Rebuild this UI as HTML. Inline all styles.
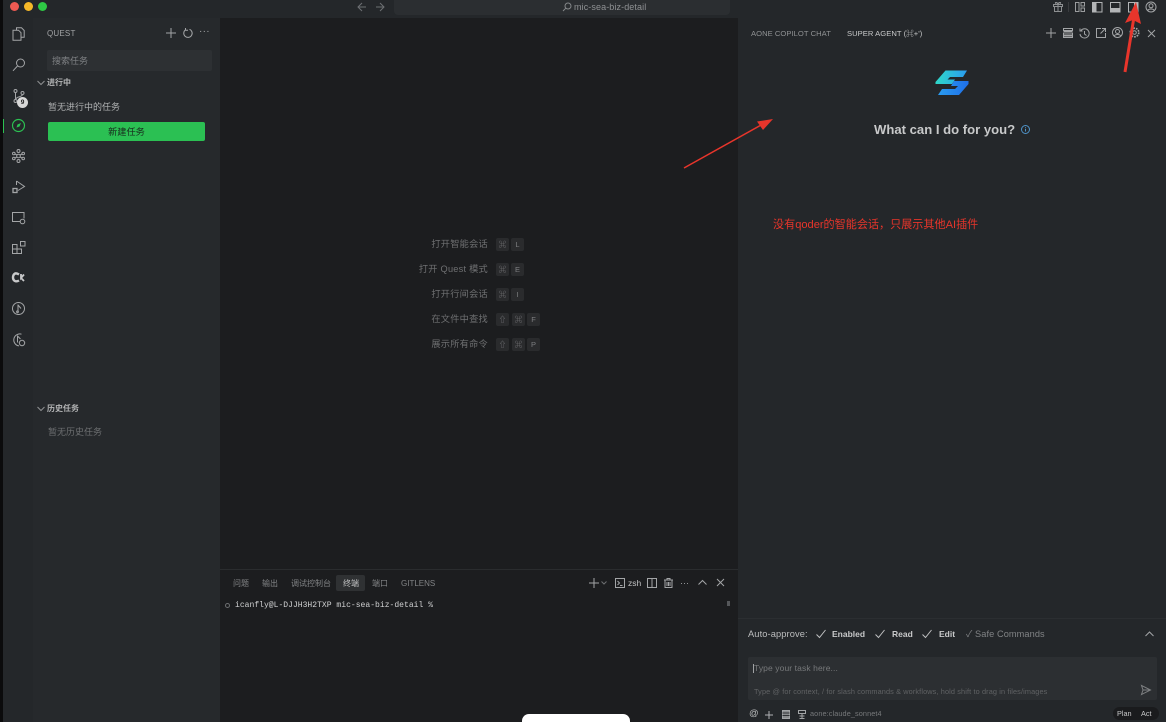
<!DOCTYPE html>
<html lang="zh">
<head>
<meta charset="utf-8">
<style>
html,body{margin:0;padding:0;background:#1c1d1f;width:1166px;height:722px;overflow:hidden;}
body{position:relative;font-family:"Liberation Sans","Noto Sans CJK SC",sans-serif;color:#aaa;}
#w{position:absolute;left:0;top:0;width:1166px;height:722px;overflow:hidden;filter:blur(.35px);}
.a{position:absolute;white-space:nowrap;}
.r{position:absolute;}
svg.i{position:absolute;fill:none;stroke:#a3a5a7;stroke-width:1;overflow:visible;}
.k{position:absolute;height:13px;width:13px;background:#2a2b2d;border-radius:2px;color:#7d7e80;font-size:7.5px;line-height:13px;text-align:center;}
.sl{position:absolute;right:678px;font-size:9.2px;color:#6f7072;letter-spacing:.25px;white-space:nowrap;line-height:12px;}
</style>
</head>
<body>
<div id="w">
<!-- regions -->
<div class="r" style="left:0;top:0;width:1166px;height:18px;background:#24272a;"></div>
<div class="r" style="left:0;top:0;width:3px;height:722px;background:#0b0b0c;"></div>
<div class="r" style="left:3px;top:18px;width:30px;height:704px;background:#24272a;"></div>
<div class="r" style="left:33px;top:18px;width:187px;height:704px;background:#26292c;"></div>
<div class="r" style="left:220px;top:18px;width:518px;height:704px;background:#1c1d1f;"></div>
<div class="r" style="left:738px;top:18px;width:428px;height:704px;background:#24272a;"></div>
<div class="r" style="left:220px;top:569px;width:518px;height:1px;background:#2a2c2e;"></div>
<div class="r" style="left:738px;top:618px;width:428px;height:1px;background:#2b2e31;"></div>
<div class="r" style="left:394px;top:0;width:336px;height:15px;background:#2b2e31;border-radius:0 0 4px 4px;"></div>

<!-- traffic lights -->
<div class="r" style="left:10px;top:2px;width:9px;height:9px;border-radius:50%;background:#ee5a52;"></div>
<div class="r" style="left:24px;top:2px;width:9px;height:9px;border-radius:50%;background:#f6b828;"></div>
<div class="r" style="left:38px;top:2px;width:9px;height:9px;border-radius:50%;background:#2ec845;"></div>

<!-- title nav -->
<svg class="i" style="left:357px;top:2px;stroke:#6d7073" width="10" height="10"><path d="M9 5H1M5 1 1 5l4 4"/></svg>
<svg class="i" style="left:375px;top:2px;stroke:#6d7073" width="10" height="10"><path d="M1 5h8M5 1l4 4-4 4"/></svg>
<svg class="i" style="left:562px;top:2px;stroke:#85888a" width="10" height="10"><circle cx="6" cy="4" r="3"/><path d="M3.8 6.2 1 9"/></svg>
<div class="a" style="left:574px;top:1px;font-size:9px;line-height:12px;color:#8f9193;letter-spacing:.1px;">mic-sea-biz-detail</div>

<!-- title right icons -->
<svg class="i" style="left:1052px;top:1px;stroke:#8d8f91" width="12" height="12"><path d="M1.5 3.5h9v2h-9zM2.5 5.500v5h7v-5M6 3.500v7M4 3.500 3.500 1.500h1.500l1 2 1-2h1.500L8 3.500"/></svg>
<div class="r" style="left:1068px;top:2px;width:1px;height:10px;background:#3a3c3f;"></div>
<svg class="i" style="left:1075px;top:2px;stroke:#9a9c9e" width="10" height="11"><rect x=".5" y=".5" width="3.500" height="9"/><rect x="6" y=".5" width="3.500" height="3.500"/><rect x="6" y="6" width="3.500" height="3.500"/></svg>
<svg class="i" style="left:1092px;top:2px;stroke:#b3b5b7" width="11" height="11"><rect x=".5" y=".5" width="9.500" height="9.500"/><rect x="1" y="1" width="3.500" height="8.500" fill="#b3b5b7" stroke="none"/></svg>
<svg class="i" style="left:1110px;top:2px;stroke:#b3b5b7" width="11" height="11"><rect x=".5" y=".5" width="9.500" height="9.500"/><rect x="1" y="6" width="8.500" height="3.500" fill="#b3b5b7" stroke="none"/></svg>
<svg class="i" style="left:1128px;top:2px;stroke:#b3b5b7" width="11" height="11"><rect x=".5" y=".5" width="9.500" height="9.500"/><rect x="6" y="1" width="3.500" height="8.500" fill="#b3b5b7" stroke="none"/></svg>
<svg class="i" style="left:1145px;top:1px;stroke:#a3a5a7" width="12" height="12"><circle cx="6" cy="6" r="5"/><circle cx="6" cy="4.800" r="2"/><path d="M2.800 9.500c.8-2 5.600-2 6.400 0"/></svg>

<!-- activity bar -->
<svg class="i" style="left:12px;top:27px" width="13" height="14"><path d="M4.500 3V.8h5l2.700 2.700v6.700H9.500M1 3.200h5.500l2.500 2.500v7.500H1z"/></svg>
<svg class="i" style="left:12px;top:58px" width="14" height="14"><circle cx="8.500" cy="5" r="4"/><path d="M5.500 8 1 12.800"/></svg>
<svg class="i" style="left:13px;top:89px" width="12" height="14"><circle cx="2.500" cy="2" r="1.500"/><circle cx="2.500" cy="12" r="1.500"/><circle cx="9.500" cy="4" r="1.500"/><path d="M2.500 3.500v7M9.500 5.500C9.500 8 3 7.500 2.500 10.500"/></svg>
<div class="r" style="left:17px;top:97px;width:11px;height:11px;border-radius:50%;background:#d8d8d8;color:#222;font-size:6.500px;font-weight:bold;line-height:11px;text-align:center;">9</div>
<div class="r" style="left:3px;top:119px;width:1px;height:14px;background:#2cc152;"></div>
<svg class="i" style="left:12px;top:119px;stroke:#2cc152;stroke-width:1.200" width="14" height="14"><circle cx="6.500" cy="6.500" r="6"/><path d="M4.500 8.500 5.500 5.500 9 4 7.500 7.500z" fill="#2cc152" stroke="none"/></svg>
<svg class="i" style="left:12px;top:149px" width="13" height="14"><circle cx="6.500" cy="2" r="1.500"/><circle cx="6.500" cy="7" r="1.800"/><circle cx="6.500" cy="12" r="1.500"/><circle cx="1.800" cy="4.500" r="1.300"/><circle cx="11.200" cy="4.500" r="1.300"/><circle cx="1.800" cy="9.500" r="1.300"/><circle cx="11.200" cy="9.500" r="1.300"/><path d="M3 5l2 1M10 5 8 6M3 9l2-1M10 9 8 8"/></svg>
<svg class="i" style="left:12px;top:180px" width="13" height="14"><path d="M4.500 1 12.500 6.500 6 10.500"/><path d="M4.500 1v4"/><rect x="1" y="8.500" width="4" height="4" stroke-width="1.300"/></svg>
<svg class="i" style="left:12px;top:212px" width="14" height="13"><path d="M8 9.500H.5V.5h11.500v6"/><circle cx="10.500" cy="9.500" r="2.300"/></svg>
<svg class="i" style="left:12px;top:241px" width="14" height="14"><rect x=".5" y="3.500" width="4.500" height="4.500"/><rect x=".5" y="8" width="4.500" height="4.500"/><rect x="5" y="8" width="4.500" height="4.500"/><path d="M5 8h4.500V4.500" stroke="none"/><rect x="8.500" y=".5" width="4.500" height="4.500"/></svg>
<svg class="i" style="left:12px;top:272px;stroke:#c8c9ca;stroke-width:2.400" width="13" height="12"><path d="M7 2.500C3-.2 1 2.500 1 5.500s2.500 5 6 3"/><path d="M9 2v4l3-3.500M9 6l3 3" stroke-width="1.800"/></svg>
<svg class="i" style="left:12px;top:302px" width="13" height="13"><circle cx="6.500" cy="6.500" r="6"/><path d="M6 2.500v7.500M6 3l3 3.500"/><circle cx="5.500" cy="9.800" r=".9"/></svg>
<svg class="i" style="left:12px;top:333px" width="14" height="14"><path d="M9.500 1.200A6 6 0 1 0 7 12.900"/><path d="M5.500 2.500v7M5.500 3l3 3"/><circle cx="10" cy="10" r="2.700"/></svg>

<!-- sidebar -->
<div class="a" style="left:47px;top:28px;font-size:8px;line-height:12px;color:#a0a2a4;letter-spacing:.2px;">QUEST</div>
<svg class="i" style="left:166px;top:28px" width="10" height="10"><path d="M5 0v10M0 5h10"/></svg>
<svg class="i" style="left:183px;top:28px" width="10" height="10"><path d="M6.500 1.300A4.200 4.200 0 1 1 2.500 1.800M2.500 0v2.300H5"/></svg>
<div class="a" style="left:199px;top:26px;font-size:10px;line-height:12px;color:#a3a5a7;letter-spacing:.3px;">···</div>
<div class="r" style="left:47px;top:50px;width:165px;height:21px;background:#2d3033;border-radius:2px;"></div>
<div class="a" style="left:52px;top:55px;font-size:9px;line-height:12px;color:#7f8184;">搜索任务</div>
<svg class="i" style="left:37px;top:80px;stroke:#8f9193" width="8" height="6"><path d="M.5 1 4 4.500 7.500 1"/></svg>
<div class="a" style="left:47px;top:77px;font-size:8px;line-height:12px;color:#b6b7b8;font-weight:bold;">进行中</div>
<div class="a" style="left:48px;top:100.500px;font-size:9px;line-height:13px;color:#b1b3b4;">暂无进行中的任务</div>
<div class="r" style="left:48px;top:122px;width:157px;height:19px;background:#2bc053;border-radius:2px;"></div>
<div class="a" style="left:48px;width:157px;text-align:center;top:125.500px;font-size:9.200px;line-height:13px;color:#182a1d;">新建任务</div>
<svg class="i" style="left:37px;top:406px;stroke:#8f9193" width="8" height="6"><path d="M.5 1 4 4.500 7.500 1"/></svg>
<div class="a" style="left:47px;top:403px;font-size:8px;line-height:12px;color:#b6b7b8;font-weight:bold;">历史任务</div>
<div class="a" style="left:48px;top:426px;font-size:9px;line-height:13px;color:#6e7072;">暂无历史任务</div>

<!-- editor hints -->
<div class="sl" style="top:238px;">打开智能会话</div>
<div class="k" style="left:496px;top:238px;">⌘</div><div class="k" style="left:511px;top:238px;">L</div>
<div class="sl" style="top:263px;">打开 Quest 模式</div>
<div class="k" style="left:496px;top:263px;">⌘</div><div class="k" style="left:511px;top:263px;">E</div>
<div class="sl" style="top:288px;">打开行间会话</div>
<div class="k" style="left:496px;top:288px;">⌘</div><div class="k" style="left:511px;top:288px;">I</div>
<div class="sl" style="top:313px;">在文件中查找</div>
<div class="k" style="left:496px;top:313px;">⇧</div><div class="k" style="left:512px;top:313px;">⌘</div><div class="k" style="left:527px;top:313px;">F</div>
<div class="sl" style="top:338px;">展示所有命令</div>
<div class="k" style="left:496px;top:338px;">⇧</div><div class="k" style="left:512px;top:338px;">⌘</div><div class="k" style="left:527px;top:338px;">P</div>

<!-- terminal -->
<div class="a" style="left:233px;top:578px;font-size:8px;line-height:12px;color:#828486;">问题</div>
<div class="a" style="left:262px;top:578px;font-size:8px;line-height:12px;color:#828486;">输出</div>
<div class="a" style="left:291px;top:578px;font-size:8px;line-height:12px;color:#828486;">调试控制台</div>
<div class="r" style="left:336px;top:575px;width:29px;height:16px;background:#2f3133;border-radius:2px;"></div>
<div class="a" style="left:343px;top:578px;font-size:8px;line-height:12px;color:#c4c5c6;">终端</div>
<div class="a" style="left:372px;top:578px;font-size:8px;line-height:12px;color:#828486;">端口</div>
<div class="a" style="left:401px;top:578px;font-size:8px;line-height:12px;color:#828486;">GITLENS</div>
<svg class="i" style="left:589px;top:578px" width="10" height="10"><path d="M5 0v10M0 5h10"/></svg>
<svg class="i" style="left:601px;top:581px;stroke:#6d6f71" width="6" height="4"><path d="M.5.500 3 3 5.500.5"/></svg>
<svg class="i" style="left:615px;top:578px" width="10" height="10"><rect x=".5" y=".5" width="9" height="9"/><path d="M2.500 3 4.500 5 2.500 7M5 7.500h2.500"/></svg>
<div class="a" style="left:628px;top:577px;font-size:8.500px;line-height:12px;color:#c0c1c2;">zsh</div>
<svg class="i" style="left:647px;top:578px" width="10" height="10"><rect x=".5" y=".5" width="9" height="9"/><path d="M5 .5v9"/></svg>
<svg class="i" style="left:664px;top:578px" width="9" height="10"><path d="M0 2h9M3 2V.5h3V2M1 2v7.500h7V2M3 4v4M4.500 4v4M6 4v4"/></svg>
<div class="a" style="left:680px;top:577px;font-size:9px;line-height:12px;color:#a3a5a7;">···</div>
<svg class="i" style="left:698px;top:579px" width="9" height="7"><path d="M.5 5.500 4.500 1.500 8.500 5.500"/></svg>
<svg class="i" style="left:717px;top:579px" width="7" height="7"><path d="M0 0l7 7M7 0 0 7"/></svg>
<div class="r" style="left:225px;top:603px;width:3px;height:3px;border:1px solid #6d6f71;border-radius:50%;"></div>
<div class="a" style="left:235px;top:600px;font-family:'Liberation Mono',monospace;font-size:8.050px;line-height:12px;color:#d0d1d2;">icanfly@L-DJJH3H2TXP mic-sea-biz-detail %</div>
<div class="r" style="left:727px;top:601px;width:3px;height:5px;background:#55575a;"></div>

<!-- white shape -->
<div class="r" style="left:522px;top:714px;width:108px;height:8px;background:#fff;border-radius:7px 7px 0 0;"></div>

<!-- right panel header -->
<div class="a" style="left:751px;top:28px;font-size:7.600px;line-height:12px;color:#8f9193;letter-spacing:.05px;">AONE COPILOT CHAT</div>
<div class="a" style="left:847px;top:28px;font-size:7.600px;line-height:12px;color:#c8c9ca;letter-spacing:.05px;">SUPER AGENT (⌘+')</div>
<svg class="i" style="left:1046px;top:28px" width="10" height="10"><path d="M5 0v10M0 5h10"/></svg>
<svg class="i" style="left:1063px;top:28px" width="10" height="10"><path d="M.5.500h9v2h-9zM.5 3.500h9M.5 5h9v2h-9zM.5 8h9v1.500h-9z"/></svg>
<svg class="i" style="left:1079px;top:28px" width="11" height="11"><path d="M2 2.500A4.600 4.600 0 1 1 1 6M1 .5v2.500h2.500M5.500 3v3l2 1.500"/></svg>
<svg class="i" style="left:1096px;top:28px" width="10" height="10"><path d="M5 .5H.5v9h9V5M6 .5h3.500V4M9.500.5 4.500 5.500"/></svg>
<svg class="i" style="left:1112px;top:27px" width="11" height="11"><circle cx="5.500" cy="5.500" r="5"/><circle cx="5.500" cy="4.500" r="2"/><path d="M2.300 9c.8-2 5.600-2 6.400 0"/></svg>
<svg class="i" style="left:1129px;top:27px" width="11" height="11"><circle cx="5.500" cy="5.500" r="1.800"/><circle cx="5.500" cy="5.500" r="4.300" stroke-width="1.600" stroke-dasharray="1.700 1"/></svg>
<svg class="i" style="left:1148px;top:30px" width="7" height="7"><path d="M0 0l7 7M7 0 0 7"/></svg>

<!-- logo -->
<svg class="r" style="left:935px;top:70px" width="34" height="26" viewBox="0 0 34 26">
<defs><linearGradient id="g1" x1="0" y1="0" x2="1" y2="0"><stop offset="0" stop-color="#2fd8c8"/><stop offset="1" stop-color="#2a9cf0"/></linearGradient><linearGradient id="g2" x1="0" y1="0" x2="1" y2="0"><stop offset="0" stop-color="#2a9cf0"/><stop offset="1" stop-color="#1f6fe8"/></linearGradient></defs>
<path d="M10.500 .5H32L28 7H15L12.500 9.500H20L17 14H.5V12Z" fill="url(#g1)"/>
<path d="M19 11H33.500V14L24 25H3L7 19H20L23 16H16Z" fill="url(#g2)"/>
</svg>
<div class="a" style="left:874px;top:122px;font-size:13.100px;line-height:16px;color:#c8c9ca;font-weight:bold;">What can I do for you?</div>
<svg class="i" style="left:1021px;top:125px;stroke:#4f93c8" width="9" height="9"><circle cx="4.500" cy="4.500" r="4"/><path d="M4.500 4v2.500M4.500 2.300v1"/></svg>

<!-- annotation text -->
<div class="a" style="left:773px;top:218px;font-size:11.100px;line-height:14px;color:#e8352b;">没有qoder的智能会话，只展示其他AI插件</div>

<!-- auto approve -->
<div class="a" style="left:748px;top:628px;font-size:9.300px;line-height:12px;color:#bcbdbe;letter-spacing:.1px;">Auto-approve:</div>
<svg class="i" style="left:816px;top:629px;stroke:#c0c1c2" width="10" height="10"><path d="M.5 5.500 3.500 8.500 9.500 1"/></svg>
<div class="a" style="left:832px;top:628px;font-size:8.500px;line-height:12px;color:#c8c9ca;font-weight:bold;">Enabled</div>
<svg class="i" style="left:875px;top:629px;stroke:#c0c1c2" width="10" height="10"><path d="M.5 5.500 3.500 8.500 9.500 1"/></svg>
<div class="a" style="left:892px;top:628px;font-size:8.500px;line-height:12px;color:#c8c9ca;font-weight:bold;">Read</div>
<svg class="i" style="left:922px;top:629px;stroke:#c0c1c2" width="10" height="10"><path d="M.5 5.500 3.500 8.500 9.500 1"/></svg>
<div class="a" style="left:939px;top:628px;font-size:8.500px;line-height:12px;color:#c8c9ca;font-weight:bold;">Edit</div>
<div class="a" style="left:966px;top:628px;font-size:9.200px;line-height:12px;color:#818385;letter-spacing:.1px;">✓ Safe Commands</div>
<svg class="i" style="left:1145px;top:631px" width="9" height="6"><path d="M.5 5 4.500 1 8.500 5"/></svg>

<!-- input -->
<div class="r" style="left:748px;top:657px;width:409px;height:43px;background:#2c2f32;border-radius:2px;"></div>
<div class="r" style="left:753px;top:664px;width:1px;height:9px;background:#a0a2a4;"></div>
<div class="a" style="left:754px;top:662px;font-size:8.500px;line-height:12px;color:#77797b;letter-spacing:.1px;">Type your task here...</div>
<div class="a" style="left:754px;top:686px;font-size:7.300px;line-height:12px;color:#606264;letter-spacing:.13px;">Type @ for context, / for slash commands &amp; workflows, hold shift to drag in files/images</div>
<svg class="i" style="left:1141px;top:685px;stroke:#7d7f81" width="10" height="10"><path d="M.5.500 9.500 5 .5 9.500 2 5zM2 5h7.500"/></svg>

<!-- bottom bar -->
<div class="a" style="left:749px;top:708px;font-size:9.500px;line-height:12px;color:#bcbdbe;">@</div>
<svg class="i" style="left:765px;top:711px;stroke:#b0b2b4" width="8" height="8"><path d="M4 0v8M0 4h8"/></svg>
<svg class="i" style="left:782px;top:710px;stroke:#a3a5a7" width="8" height="9"><rect x=".5" y=".5" width="7" height="8" fill="#8a8c8e"/><path d="M.5 3h7M.5 5.500h7" stroke="#303235"/></svg>
<svg class="i" style="left:798px;top:710px;stroke:#a3a5a7" width="8" height="9"><path d="M.5.500h7v3h-7zM4 3.500v5M1.500 6h5M1.500 8.500h5"/></svg>
<div class="a" style="left:810px;top:708px;font-size:7.300px;line-height:12px;color:#77797b;letter-spacing:.1px;">aone:claude_sonnet4</div>
<div class="r" style="left:1113px;top:707px;width:46px;height:13px;background:#1a1b1d;border-radius:7px;"></div>
<div class="a" style="left:1117px;top:708px;font-size:7.300px;line-height:12px;color:#c8c9ca;">Plan</div>
<div class="a" style="left:1141px;top:708px;font-size:7.300px;line-height:12px;color:#c8c9ca;">Act</div>

<!-- red arrows -->
<svg class="r" style="left:0;top:0" width="1166" height="722">
<path d="M684 168 762 124.500" stroke="#e8352b" stroke-width="1.500" fill="none"/>
<path d="M773 119 757 121.500 763 130Z" fill="#e8352b"/>
<path d="M1125 72 1133.500 20" stroke="#e8352b" stroke-width="3" fill="none"/>
<path d="M1136 2 1125 23 1133 20 1141 24Z" fill="#e8352b"/>
</svg>
</div>
</body>
</html>
